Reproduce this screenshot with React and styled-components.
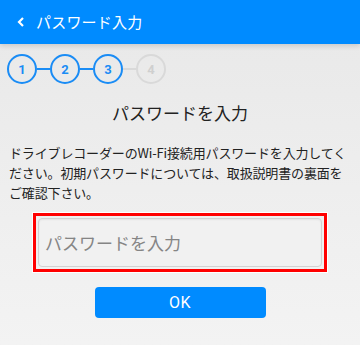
import React from "react";
import styled, { createGlobalStyle } from "styled-components";

const Global = createGlobalStyle`
  html, body { margin: 0; padding: 0; }
  body {
    width: 360px;
    height: 345px;
    overflow: hidden;
    font-family: "Noto Sans CJK JP", "Noto Sans", sans-serif;
    background: #f1f1f1;
  }
`;

const Page = styled.div`
  width: 360px;
  height: 345px;
  display: flex;
  flex-direction: column;
  background: linear-gradient(#e8e8e8, #f3f3f3);
`;

const Header = styled.header`
  height: 44px;
  flex: none;
  background: #008bff;
  display: flex;
  align-items: center;
  padding-left: 17px;
  gap: 11px;
  color: #fff;
  box-shadow: 0 2px 5px rgba(0, 0, 0, 0.14);
  position: relative;
  z-index: 1;
`;

const HeaderTitle = styled.div`
  font-size: 15px;
  line-height: 20px;
  letter-spacing: 0.2px;
`;

const Stepper = styled.div`
  display: flex;
  align-items: center;
  padding: 10px 0 0 7px;
`;

const Step = styled.div`
  width: 30px;
  height: 30px;
  box-sizing: border-box;
  border-radius: 50%;
  border: 2px solid ${(p) => (p.$done ? "#1a8cf5" : "#d9d9d9")};
  color: ${(p) => (p.$done ? "#1a8cf5" : "#cfcfcf")};
  font-family: Roboto, "Noto Sans", sans-serif;
  font-weight: 700;
  font-size: 13px;
  display: flex;
  align-items: center;
  justify-content: center;
  background: transparent;
`;

const Connector = styled.div`
  width: 13px;
  height: 2px;
  background: ${(p) => (p.$done ? "#1a8cf5" : "#d9d9d9")};
`;

const Title = styled.h1`
  margin: 17px 0 0;
  font-weight: 400;
  font-size: 17px;
  line-height: 24px;
  text-align: center;
  color: #222;
`;

const Description = styled.p`
  margin: 18px 10px 0 9px;
  font-size: 13px;
  line-height: 20px;
  letter-spacing: -0.15px;
  color: #222;
`;

const Highlight = styled.div`
  margin: 10px auto 0;
  width: 294px;
  box-sizing: border-box;
  border: 3px solid #f00;
  padding: 2px;
  box-shadow: 0 0 0 1px #fff;
`;

const Input = styled.input`
  display: block;
  width: 100%;
  height: 49px;
  box-sizing: border-box;
  border: 1px solid #d2d2d2;
  border-radius: 4px;
  background: #f1f1f1;
  box-shadow: inset 0 1px 2px rgba(0, 0, 0, 0.06);
  padding: 0 6px;
  font-family: "Noto Sans CJK JP", "Noto Sans", sans-serif;
  font-size: 17px;
  color: #333;
  outline: none;
  &::placeholder { color: #858585; }
`;

const Button = styled.button`
  display: block;
  margin: 15px auto 0;
  width: 171px;
  height: 31px;
  border: none;
  border-radius: 4px;
  background: #008bff;
  color: #fff;
  font-family: Roboto, "Noto Sans", sans-serif;
  font-size: 16px;
  letter-spacing: 0.5px;
  padding: 0;
`;

const steps = [1, 2, 3, 4];

export default function App() {
  return (
    <>
      <Global />
      <Page>
        <Header>
          <svg width="8" height="10" viewBox="0 0 8 10">
            <path d="M6 1 L2 5 L6 9" fill="none" stroke="#fff" strokeWidth="2.2" />
          </svg>
          <HeaderTitle>パスワード入力</HeaderTitle>
        </Header>
        <Stepper>
          {steps.map((n, i) => (
            <React.Fragment key={n}>
              {i > 0 && <Connector $done={n <= 3} />}
              <Step $done={n <= 3}>{n}</Step>
            </React.Fragment>
          ))}
        </Stepper>
        <Title>パスワードを入力</Title>
        <Description>
          ドライブレコーダーのWi-Fi接続用パスワードを入力してください。初期パスワードについては、取扱説明書の裏面をご確認下さい。
        </Description>
        <Highlight>
          <Input type="password" placeholder="パスワードを入力" />
        </Highlight>
        <Button>OK</Button>
      </Page>
    </>
  );
}
